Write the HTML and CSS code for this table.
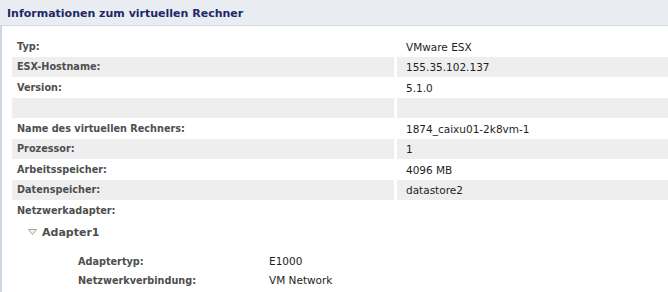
FILE: index.html
```html
<!DOCTYPE html>
<html>
<head>
<meta charset="utf-8">
<link rel="stylesheet" href="styles.css">
</head>
<body>
<div class="panel">
  <div class="header">Informationen zum virtuellen Rechner</div>
  <div class="content">
    <div class="table">
      <div class="row"><div class="label">Typ:</div><div class="value">VMware ESX</div></div>
      <div class="row alt"><div class="label">ESX-Hostname:</div><div class="value">155.35.102.137</div></div>
      <div class="row"><div class="label">Version:</div><div class="value">5.1.0</div></div>
      <div class="row alt"><div class="label"></div><div class="value"></div></div>
      <div class="row"><div class="label">Name des virtuellen Rechners:</div><div class="value">1874_caixu01-2k8vm-1</div></div>
      <div class="row alt"><div class="label">Prozessor:</div><div class="value">1</div></div>
      <div class="row"><div class="label">Arbeitsspeicher:</div><div class="value">4096 MB</div></div>
      <div class="row alt"><div class="label">Datenspeicher:</div><div class="value">datastore2</div></div>
      <div class="row"><div class="label">Netzwerkadapter:</div><div class="value"></div></div>
    </div>
    <div class="adapter">
      <div class="adapter-head">
        <svg class="tri" width="9" height="6" viewBox="0 0 9 6"><path d="M0.5 0.5 H8.5 L4.5 5.5 Z" fill="#f4f4f4" stroke="#a0a0a0" stroke-width="1"/></svg>
        <span class="adapter-title">Adapter1</span>
      </div>
      <div class="subtable">
        <div class="subrow"><div class="sublabel">Adaptertyp:</div><div class="subvalue">E1000</div></div>
        <div class="subrow"><div class="sublabel">Netzwerkverbindung:</div><div class="subvalue">VM Network</div></div>
      </div>
    </div>
  </div>
</div>
</body>
</html>
```
FILE: styles.css
```css
html, body {
  margin: 0;
  padding: 0;
  background: #ffffff;
}
body {
  font-family: "DejaVu Sans", Verdana, sans-serif;
  font-size: 10px;
  width: 668px;
  height: 292px;
  overflow: hidden;
}
.panel {
  display: flex;
  flex-direction: column;
  height: 292px;
}
.header {
  box-sizing: border-box;
  background: #e9edf1;
  border-bottom: 1px solid #d2d8de;
  height: 26px;
  padding: 2px 0 0 7px;
  line-height: 23px;
  font-size: 11px;
  font-weight: bold;
  color: #1c2867;
}
.content {
  flex: 1;
  border-left: 2px solid #ccd7e2;
  padding: 10px 0 0 10px;
}
.row {
  display: grid;
  grid-template-columns: 382px 1fr;
  column-gap: 3px;
  height: 21px;
  line-height: 22px;
}
.row.alt {
  height: 20px;
  line-height: 20px;
}
.row.alt .label,
.row.alt .value {
  background: #eeeeee;
}
.label {
  padding-left: 5px;
  font-weight: bold;
  font-size: 9.7px;
  color: #4e4e4e;
}
.value {
  padding-left: 9px;
  font-size: 10.5px;
  color: #1e1e1e;
}
.adapter {
  padding-left: 16px;
}
.adapter-head {
  display: flex;
  align-items: center;
  gap: 5px;
  height: 22px;
}
.tri {
  display: block;
}
.adapter-title {
  font-weight: bold;
  font-size: 11px;
  color: #4e4e4e;
}
.subtable {
  padding-left: 50px;
  padding-top: 9px;
}
.subrow {
  display: grid;
  grid-template-columns: 191px 1fr;
  height: 19px;
  line-height: 19px;
}
.sublabel {
  font-weight: bold;
  font-size: 9.7px;
  color: #4e4e4e;
}
.subvalue {
  font-size: 10.5px;
  color: #1e1e1e;
}
```
